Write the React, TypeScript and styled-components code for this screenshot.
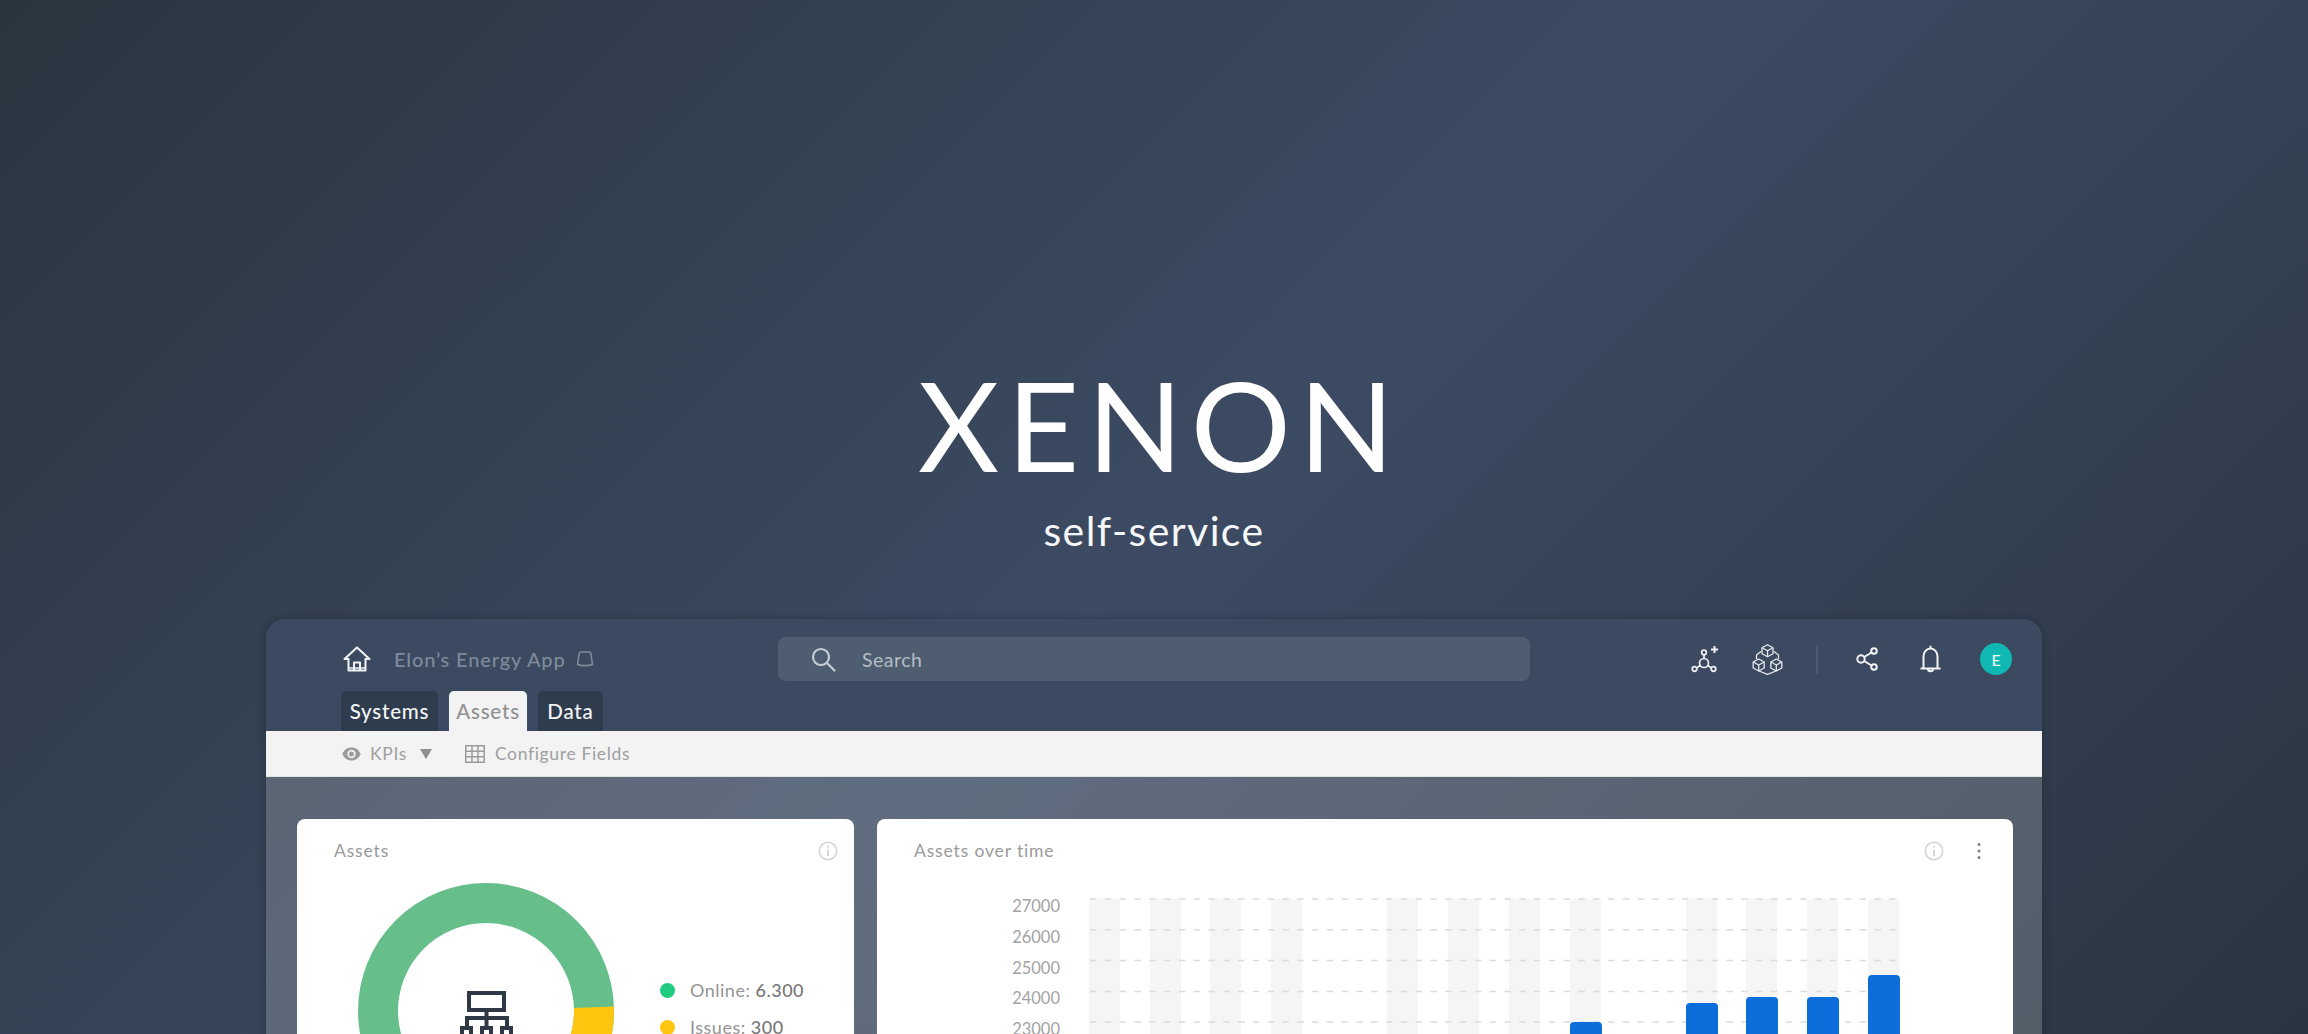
import React from "react";
import styled, { createGlobalStyle } from "styled-components";

const Global = createGlobalStyle`
  html, body { margin: 0; padding: 0; background: #2f3b49; }
  * { box-sizing: border-box; }
`;

const Page = styled.div`
  width: 2308px;
  height: 1034px;
  overflow: hidden;
  display: flex;
  flex-direction: column;
  align-items: center;
  font-family: Lato, "Open Sans", sans-serif;
  background: linear-gradient(135deg, #2a353f 0%, #3c4b63 51%, #2a3541 100%);
`;

const Hero = styled.header`
  width: 100%;
  height: 619px;
  flex: none;
  padding-top: 349px;
  display: flex;
  flex-direction: column;
  align-items: center;
  color: #fff;
`;

const HeroTitle = styled.h1`
  margin: 0 0 0 12px;
  font-size: 125px;
  line-height: 150px;
  font-weight: 400;
  letter-spacing: 8px;
`;

const HeroSub = styled.div`
  font-size: 41px;
  line-height: 48px;
  margin-top: 8px;
  letter-spacing: 1.4px;
  color: #f6f7f9;
`;

const Win = styled.section`
  width: 1776px;
  height: 520px;
  flex: none;
  border-radius: 20px 20px 0 0;
  background: rgba(255, 255, 255, 0.19);
  box-shadow: 0 0 8px rgba(25, 32, 42, 0.45);
  overflow: hidden;
`;

const Head = styled.div`
  height: 112px;
  background: #3b4a60;
  padding-top: 18px;
`;

const TopRow = styled.div`
  display: grid;
  grid-template-columns: 512px 752px 1fr;
  height: 44px;
  align-items: center;
`;

const Brand = styled.div`
  display: flex;
  align-items: center;
  padding-left: 77px;
`;

const AppName = styled.span`
  margin-left: 23px;
  margin-right: 10px;
  color: #7e8b9a;
  font-size: 20px;
  font-weight: 500;
  letter-spacing: 0.85px;
  white-space: nowrap;
`;

const Search = styled.div`
  height: 44px;
  border-radius: 8px;
  background: #4f5d70;
  display: flex;
  align-items: center;
  padding-left: 33px;
  gap: 26px;
  color: #b4bcc6;
  font-size: 19.5px;
  letter-spacing: 0.5px;
`;

const Actions = styled.div`
  display: flex;
  align-items: center;
  justify-content: flex-end;
  padding-right: 30px;
`;

const ActionSlot = styled.span<{ $left: number }>`
  display: flex;
  margin-left: ${(p) => p.$left}px;
`;

const Divider = styled.span`
  width: 2px;
  height: 29px;
  margin-left: 33px;
  background: #4d5a6d;
`;

const Avatar = styled.span`
  width: 32px;
  height: 32px;
  margin-left: 39px;
  border-radius: 50%;
  background: #0fb8b2;
  color: #e8fbfa;
  font-size: 16px;
  font-weight: 500;
  display: flex;
  align-items: center;
  justify-content: center;
`;

const Tabs = styled.nav`
  display: flex;
  gap: 11px;
  margin-top: 10px;
  padding-left: 75px;
`;

const Tab = styled.span<{ $width: number; $active?: boolean }>`
  height: 40px;
  width: ${(p) => p.$width}px;
  display: flex;
  align-items: center;
  justify-content: center;
  border-radius: 5px 5px 0 0;
  font-size: 20.5px;
  font-weight: 500;
  letter-spacing: 0.8px;
  color: ${(p) => (p.$active ? "#8f9193" : "#f4f5f6")};
  background: ${(p) => (p.$active ? "#f3f3f3" : "#2f3c4d")};
`;

const Toolbar = styled.div`
  height: 46px;
  background: #f3f3f3;
  border-bottom: 1px solid #dfe3e6;
  display: flex;
  align-items: center;
  padding-left: 76px;
  color: #a0a0a0;
  font-size: 17.5px;
  letter-spacing: 0.65px;
`;

const ToolGroup = styled.span<{ $left?: number; $gap: number }>`
  display: flex;
  align-items: center;
  gap: ${(p) => p.$gap}px;
  margin-left: ${(p) => p.$left ?? 0}px;
`;

const Board = styled.div`
  display: flex;
  gap: 23px;
  padding: 42px 29px 0 31px;
`;

const Card = styled.article<{ $width: number }>`
  width: ${(p) => p.$width}px;
  height: 400px;
  background: #fff;
  border-radius: 8px;
  flex: none;
`;

const CardHead = styled.div<{ $pad: number }>`
  height: 64px;
  display: flex;
  align-items: flex-start;
  padding: 20px ${(p) => p.$pad}px 0 37px;
  gap: 32px;
`;

const CardTitle = styled.h2`
  flex: 1;
  margin: 0;
  font-size: 17.5px;
  line-height: 24px;
  font-weight: 400;
  letter-spacing: 0.85px;
  color: #9a9a9a;
`;

const IconBox = styled.span`
  display: flex;
  height: 24px;
  align-items: center;
`;

const DonutRow = styled.div`
  display: flex;
  padding-left: 61px;
`;

const DonutWrap = styled.div`
  position: relative;
  width: 256px;
  height: 256px;
`;

const CenterIcon = styled.span`
  position: absolute;
  left: 102px;
  top: 108px;
  display: flex;
`;

const Legend = styled.ul`
  list-style: none;
  margin: 95px 0 0 46px;
  padding: 0;
  display: flex;
  flex-direction: column;
  gap: 13px;
`;

const LegendItem = styled.li`
  height: 24px;
  display: flex;
  align-items: center;
  gap: 15px;
  color: #949494;
  font-size: 18px;
  letter-spacing: 0.5px;
  white-space: nowrap;
  strong {
    font-weight: 500;
    color: #777;
  }
`;

const Dot = styled.span<{ $color: string }>`
  width: 15px;
  height: 15px;
  border-radius: 50%;
  background: ${(p) => p.$color};
`;

const ChartRow = styled.div`
  display: flex;
  align-items: flex-start;
`;

const Axis = styled.div`
  width: 183px;
  padding-top: 8px;
  display: flex;
  flex-direction: column;
  align-items: flex-end;
  color: #a3a3a3;
  font-size: 16.5px;
`;

const AxisLabel = styled.span`
  height: 30.8px;
  line-height: 30.8px;
`;

const Plot = styled.svg`
  margin: 15px 0 0 29px;
  display: block;
`;

const Home = () => (
  <svg width="28" height="26" viewBox="0 0 28 26" fill="none" stroke="#f2f4f6" strokeWidth="2" strokeLinejoin="round">
    <path d="M1.5 13 14 1.5 26.500 13H22.500V24.500H5.500V13Z" />
    <path d="M11 24.500V16.500H17V24.500" />
    <path d="M5.500 22H22.500" strokeWidth="1.5" />
  </svg>
);

const Dome = () => (
  <svg width="18" height="16" viewBox="0 0 18 16" fill="none" stroke="#7e8b9a" strokeWidth="1.6" strokeLinejoin="round">
    <path d="M1.500 13.500 3 3.500C3.200 2 4 1 5.500 1H12.500C14 1 14.800 2 15 3.500L16.500 13.500C13 15 5 15 1.500 13.500Z" />
  </svg>
);

const Magnifier = () => (
  <svg width="25" height="25" viewBox="0 0 25 25" fill="none" stroke="#c6cdd5" strokeWidth="2.2" strokeLinecap="round">
    <circle cx="10" cy="10" r="8" />
    <path d="M16 16 23.500 23.500" />
  </svg>
);

const Molecule = () => (
  <svg width="28" height="28" viewBox="0 0 28 28" fill="none" stroke="#eef0f3" strokeWidth="1.700">
    <circle cx="13" cy="18" r="4.500" />
    <circle cx="13" cy="7.500" r="2.300" />
    <circle cx="3.500" cy="24" r="2.300" />
    <circle cx="22.500" cy="24" r="2.300" />
    <path d="M13 10V13.500M9.200 20.500 5.500 23M16.800 20.500 20.500 23" />
    <path d="M23.500 1V8M20 4.500H27" strokeWidth="2" />
  </svg>
);

const Cube = ({ x, y }: { x: number; y: number }) => (
  <g transform={`translate(${x} ${y})`}>
    <path d="M6 0 11.500 3V9L6 12 .5 9V3Z" />
    <path d="M.5 3 6 6 11.500 3M6 6V12" />
  </g>
);

const Cubes = () => (
  <svg width="31" height="31" viewBox="0 0 31 31" fill="none" stroke="#e6e9ed" strokeWidth="1.300" strokeLinejoin="round">
    <Cube x={9.500} y={0.700} />
    <Cube x={0.700} y={15} />
    <Cube x={18.300} y={15} />
    <path d="M9 7.500 4.500 11V15M22 7.500 26.500 11V15M7 27 15.500 30.300 24 27" />
  </svg>
);

const Share = () => (
  <svg width="22" height="24" viewBox="0 0 22 24" fill="none" stroke="#f2f4f6" strokeWidth="2">
    <circle cx="5" cy="12" r="3.700" />
    <circle cx="18" cy="4" r="2.800" />
    <circle cx="18" cy="20" r="2.800" />
    <path d="M8.200 10 15.500 5.500M8.200 14 15.500 18.500" />
  </svg>
);

const Bell = () => (
  <svg width="21" height="28" viewBox="0 0 21 28" fill="none" stroke="#f4f5f7" strokeWidth="2" strokeLinejoin="round">
    <path d="M3.500 23V11.500C3.500 7 6.500 3.500 10.500 3.500S17.500 7 17.500 11.500V23" />
    <path d="M.5 23.500H20.500" />
    <path d="M8 24C8 27 13 27 13 24" />
    <path d="M10.500 .8V3.500" />
  </svg>
);

const Eye = () => (
  <svg width="19" height="14" viewBox="0 0 19 14">
    <path fill="#9a9a9a" fillRule="evenodd" d="M9.500 .5C5.200 .5 1.800 3.200 .3 7 1.800 10.800 5.200 13.500 9.500 13.500S17.200 10.800 18.700 7C17.200 3.200 13.800 .5 9.500 .5ZM9.500 11.200A4.200 4.200 0 1 1 9.500 2.800 4.200 4.200 0 0 1 9.500 11.200ZM9.500 4.500A2.500 2.500 0 1 0 9.500 9.500 2.500 2.500 0 0 0 9.500 4.500Z" />
  </svg>
);

const Caret = () => (
  <svg width="12" height="10" viewBox="0 0 12 10">
    <path fill="#8f8f8f" d="M0 0H12L6 10Z" />
  </svg>
);

const CaretSlot = styled.span`
  display: flex;
  margin-left: 4px;
`;

const GridIcon = () => (
  <svg width="20" height="18" viewBox="0 0 20 18" fill="none" stroke="#9c9c9c" strokeWidth="1.500">
    <rect x=".75" y=".75" width="18.500" height="16.500" />
    <path d="M7 1V17M13 1V17M1 6.300H19M1 11.700H19" />
  </svg>
);

const Info = () => (
  <svg width="20" height="20" viewBox="0 0 20 20" fill="none" stroke="#d2d2d2" strokeWidth="1.500">
    <circle cx="10" cy="10" r="8.700" />
    <path d="M10 9V15" strokeWidth="1.800" />
    <path d="M10 5.200V6.800" strokeWidth="1.800" />
  </svg>
);

const Kebab = () => (
  <svg width="6" height="18" viewBox="0 0 6 18" fill="#7f7f7f">
    <circle cx="3" cy="2.500" r="1.500" />
    <circle cx="3" cy="9" r="1.500" />
    <circle cx="3" cy="15.500" r="1.500" />
  </svg>
);

const Hierarchy = () => (
  <svg width="54" height="60" viewBox="0 0 54 60" fill="none" stroke="#2e3945" strokeWidth="4" strokeLinejoin="miter">
    <rect x="9" y="2" width="35" height="17" />
    <path d="M26.500 19V37M7 37V27H47V37" />
    <rect x="2" y="37" width="9" height="12" />
    <rect x="22" y="37" width="9" height="12" />
    <rect x="42" y="37" width="9" height="12" />
  </svg>
);

const Donut = () => {
  const r = 108;
  const c = 2 * Math.PI * r;
  return (
    <svg width="256" height="256" viewBox="0 0 256 256" fill="none">
      <g transform="rotate(-90 128 128)">
        <circle cx="128" cy="128" r={r} stroke="#66bf8a" strokeWidth="40" />
        <circle cx="128" cy="128" r={r} stroke="#ffc60f" strokeWidth="40" strokeDasharray={`${c * 0.255} ${c}`} transform="rotate(88 128 128)" />
      </g>
    </svg>
  );
};

const gridYs = [1, 31.800, 62.600, 93.400, 124, 154.800];
const stripes = [0, 61, 121, 182, 298, 359, 420, 481, 597, 657, 718, 779];
const bars: [number, number][] = [
  [481, 124],
  [597, 105],
  [657, 99],
  [718, 99],
  [779, 77],
];

const Chart = () => (
  <Plot width="812" height="300" viewBox="0 0 812 300">
    {stripes.map((x) => (
      <rect key={x} x={x} y="1" width="31" height="299" rx="3" fill="#f5f5f5" />
    ))}
    {gridYs.map((y) => (
      <line key={y} x1="1" x2="809" y1={y} y2={y} stroke="#dcdcdc" strokeWidth="1.500" strokeDasharray="6.500 8.300" />
    ))}
    {bars.map(([x, y]) => (
      <rect key={x} x={x} y={y} width="32" height={300 - y} rx="4" fill="#0b6edb" />
    ))}
  </Plot>
);

export default function App() {
  return (
    <>
      <Global />
      <Page>
        <Hero>
          <HeroTitle>XENON</HeroTitle>
          <HeroSub>self-service</HeroSub>
        </Hero>
        <Win>
          <Head>
            <TopRow>
              <Brand>
                <Home />
                <AppName>Elon’s Energy App</AppName>
                <Dome />
              </Brand>
              <Search>
                <Magnifier />
                Search
              </Search>
              <Actions>
                <ActionSlot $left={0}><Molecule /></ActionSlot>
                <ActionSlot $left={33}><Cubes /></ActionSlot>
                <Divider />
                <ActionSlot $left={38}><Share /></ActionSlot>
                <ActionSlot $left={42}><Bell /></ActionSlot>
                <Avatar>E</Avatar>
              </Actions>
            </TopRow>
            <Tabs>
              <Tab $width={97}>Systems</Tab>
              <Tab $width={78} $active>Assets</Tab>
              <Tab $width={65}>Data</Tab>
            </Tabs>
          </Head>
          <Toolbar>
            <ToolGroup $gap={9}>
              <Eye />
              KPIs
              <CaretSlot><Caret /></CaretSlot>
            </ToolGroup>
            <ToolGroup $left={33} $gap={10}>
              <GridIcon />
              Configure Fields
            </ToolGroup>
          </Toolbar>
          <Board>
            <Card $width={557}>
              <CardHead $pad={16}>
                <CardTitle>Assets</CardTitle>
                <IconBox><Info /></IconBox>
              </CardHead>
              <DonutRow>
                <DonutWrap>
                  <Donut />
                  <CenterIcon><Hierarchy /></CenterIcon>
                </DonutWrap>
                <Legend>
                  <LegendItem>
                    <Dot $color="#1ecb7f" />
                    <span>Online: <strong>6.300</strong></span>
                  </LegendItem>
                  <LegendItem>
                    <Dot $color="#ffc60f" />
                    <span>Issues: <strong>300</strong></span>
                  </LegendItem>
                </Legend>
              </DonutRow>
            </Card>
            <Card $width={1136}>
              <CardHead $pad={31}>
                <CardTitle>Assets over time</CardTitle>
                <IconBox><Info /></IconBox>
                <IconBox><Kebab /></IconBox>
              </CardHead>
              <ChartRow>
                <Axis>
                  {["27000", "26000", "25000", "24000", "23000"].map((v) => (
                    <AxisLabel key={v}>{v}</AxisLabel>
                  ))}
                </Axis>
                <Chart />
              </ChartRow>
            </Card>
          </Board>
        </Win>
      </Page>
    </>
  );
}
